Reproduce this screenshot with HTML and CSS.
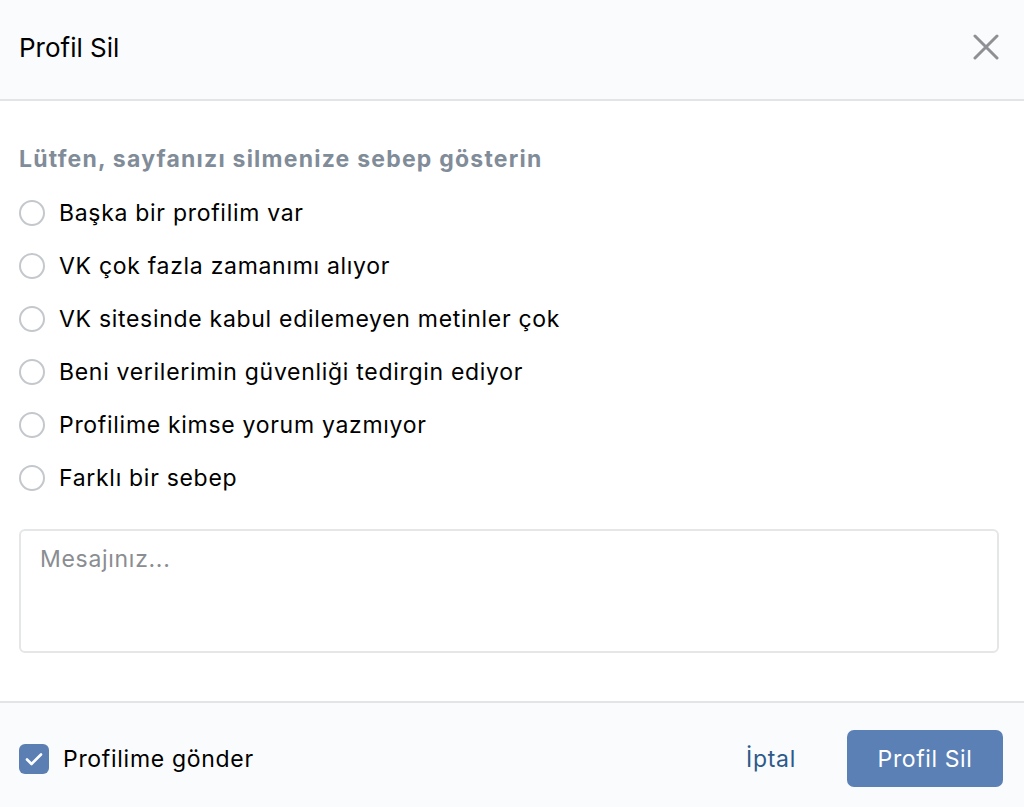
FILE: index.html
```html
<!DOCTYPE html>
<html lang="tr">
<head>
<meta charset="utf-8">
<title>Profil Sil</title>
<link rel="stylesheet" href="styles.css">
</head>
<body>
<div class="modal">
  <header class="modal-header">
    <h1 class="modal-title">Profil Sil</h1>
    <button class="close-btn" aria-label="Kapat">
      <svg width="26" height="26" viewBox="0 0 26 26"><path d="M2 2 L24 24 M24 2 L2 24" stroke="#8e9094" stroke-width="3" stroke-linecap="round" fill="none"/></svg>
    </button>
  </header>
  <main class="modal-body">
    <div class="subtitle">Lütfen, sayfanızı silmenize sebep gösterin</div>
    <ul class="reasons">
      <li class="reason"><span class="radio"></span><span>Başka bir profilim var</span></li>
      <li class="reason"><span class="radio"></span><span>VK çok fazla zamanımı alıyor</span></li>
      <li class="reason"><span class="radio"></span><span>VK sitesinde kabul edilemeyen metinler çok</span></li>
      <li class="reason"><span class="radio"></span><span>Beni verilerimin güvenliği tedirgin ediyor</span></li>
      <li class="reason"><span class="radio"></span><span>Profilime kimse yorum yazmıyor</span></li>
      <li class="reason"><span class="radio"></span><span>Farklı bir sebep</span></li>
    </ul>
    <div class="message">Mesajınız...</div>
  </main>
  <footer class="modal-footer">
    <label class="check">
      <span class="checkbox">
        <svg width="18" height="14" viewBox="0 0 18 14"><path d="M2 7.5 L6.5 12 L16 2.5" stroke="#fff" stroke-width="2.6" stroke-linecap="round" stroke-linejoin="round" fill="none"/></svg>
      </span>
      <span>Profilime gönder</span>
    </label>
    <div class="actions">
      <button class="btn-link">İptal</button>
      <button class="btn-primary">Profil Sil</button>
    </div>
  </footer>
</div>
</body>
</html>
```
FILE: styles.css
```css
* { box-sizing: border-box; }
html, body { margin: 0; padding: 0; }
body {
  font-family: Inter, "Noto Sans", sans-serif;
  background: #fff;
  color: #000;
  width: 1024px;
  height: 807px;
  overflow: hidden;
  letter-spacing: 0.7px;
}
.modal { display: flex; flex-direction: column; }
.modal-header {
  height: 101px;
  background: #fafbfc;
  border-bottom: 2px solid #e3e4e6;
  display: flex;
  align-items: center;
  justify-content: space-between;
  padding: 0 25px 0 19px;
}
.modal-title {
  margin: 0;
  font-size: 26px;
  font-weight: 400;
  letter-spacing: 0;
  padding-bottom: 4px;
}
.close-btn {
  background: none;
  border: 0;
  padding: 0;
  width: 26px;
  height: 26px;
  display: flex;
  cursor: pointer;
  margin-bottom: 6px;
}
.modal-body {
  padding: 43px 25px 48px 19px;
}
.subtitle {
  height: 30px;
  line-height: 30px;
  font-size: 23px;
  font-weight: 700;
  letter-spacing: 1.22px;
  color: #818c99;
  margin-bottom: 12px;
}
.reasons { list-style: none; margin: 0; padding: 0; }
.reason {
  height: 53px;
  display: flex;
  align-items: center;
  gap: 14px;
  font-size: 23px;
}
.radio {
  width: 26px;
  height: 26px;
  border: 2px solid #c4c8cd;
  border-radius: 50%;
  flex: none;
}
.message {
  margin-top: 25px;
  height: 124px;
  border: 2px solid #e4e6e8;
  border-radius: 6px;
  padding: 14px 19px;
  font-size: 23px;
  color: #8a8d91;
}
.modal-footer {
  border-top: 2px solid #e3e4e6;
  background: #fafbfc;
  height: 106px;
  display: flex;
  align-items: flex-start;
  justify-content: space-between;
  padding: 27px 21px 0 19px;
}
.check {
  display: flex;
  align-items: center;
  gap: 14px;
  font-size: 23px;
  height: 57px;
}
.checkbox {
  width: 30px;
  height: 30px;
  border-radius: 6px;
  background: #5b7fb3;
  display: flex;
  align-items: center;
  justify-content: center;
}
.actions { display: flex; align-items: center; gap: 26px; }
.btn-link {
  background: none;
  border: 0;
  font-family: inherit;
  letter-spacing: inherit;
  font-size: 23px;
  color: #2d5a8a;
  padding: 0 25px;
  height: 57px;
}
.btn-primary {
  background: #5b80b5;
  color: #fff;
  border: 0;
  border-radius: 7px;
  font-family: inherit;
  letter-spacing: 0.6px;
  font-size: 23px;
  width: 156px;
  height: 57px;
}
```
